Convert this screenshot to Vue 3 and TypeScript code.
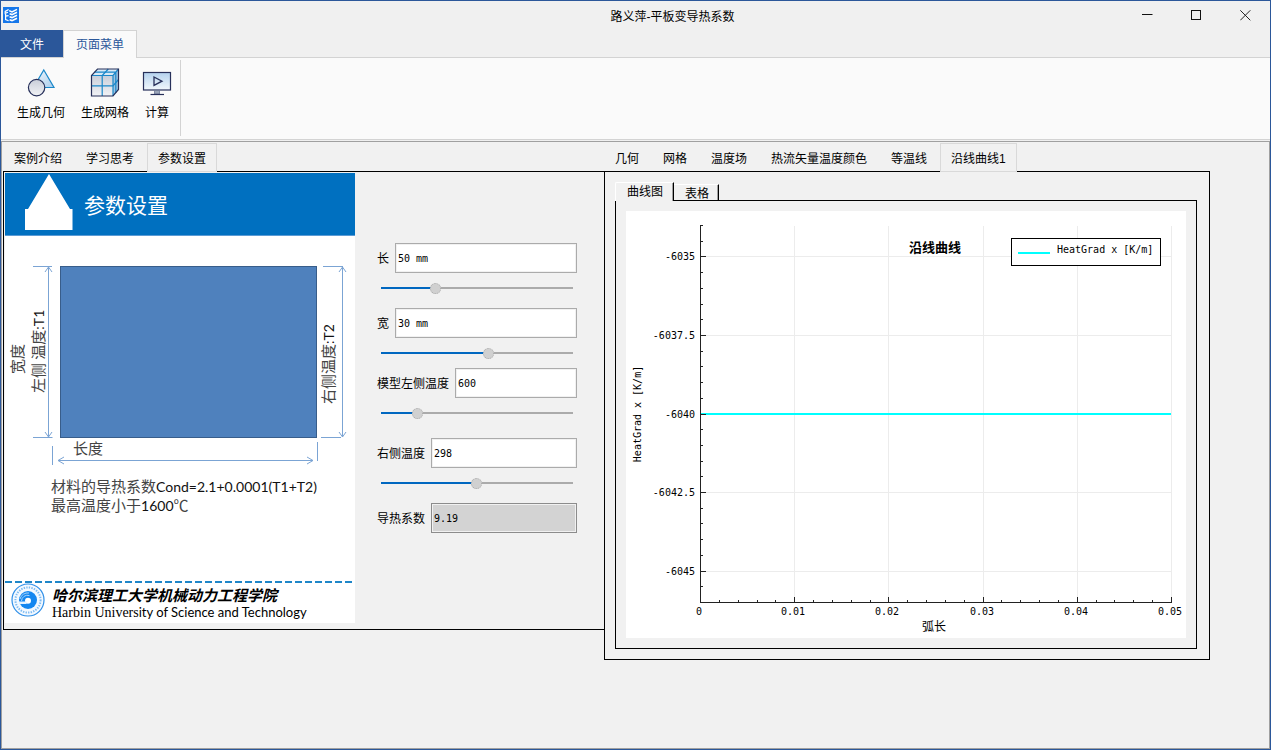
<script setup lang="ts">
import { computed, ref } from 'vue'

interface Field {
  id: string
  label: string
  value: string
  position?: number
  spacing?: 'tight' | 'loose'
}

const leftTabs = ['案例介绍', '学习思考', '参数设置']
const resultTabs = ['几何', '网格', '温度场', '热流矢量温度颜色', '等温线', '沿线曲线1']
const viewTabs = ['曲线图', '表格']

const leftTab = ref('参数设置')
const resultTab = ref('沿线曲线1')
const viewTab = ref('曲线图')

const fields = ref<Field[]>([
  { id: 'length', label: '长', value: '50 mm', position: 268 },
  { id: 'width', label: '宽', value: '30 mm', position: 566, spacing: 'tight' },
  { id: 'left-temp', label: '模型左侧温度', value: '600', position: 174, spacing: 'loose' },
  { id: 'right-temp', label: '右侧温度', value: '298', position: 495 },
  { id: 'conductivity', label: '导热系数', value: '9.19' },
])

const plot = { left: 74, right: 545, top: 14, bottom: 391 }

const xTicks = computed(() =>
  Array.from({ length: 26 }, (_, i) => ({
    at: Math.round(plot.left + (i * (plot.right - plot.left)) / 25),
    major: i % 5 === 0,
    label: i === 0 ? '0' : (i / 500).toFixed(2),
  })),
)
const yTicks = computed(() =>
  Array.from({ length: 25 }, (_, i) => ({
    at: Math.round(plot.top + (i * (plot.bottom - plot.top)) / 24),
    major: i % 5 === 2,
    label: String(-6034 - i / 2),
  })),
)
const xMajor = computed(() => xTicks.value.filter((t) => t.major))
const yMajor = computed(() => yTicks.value.filter((t) => t.major))
</script>

<template>
  <div class="window">
    <header class="titlebar">
      <svg class="app-icon" width="16" height="16" viewBox="0 0 16 16" aria-hidden="true">
        <rect width="16" height="16" fill="#1677ea" />
        <g fill="none" stroke="#fff">
          <path d="M5.6 2.4 L2.2 4.4 V6.4 L5 5.2 M2.6 7 V12.6 L5.6 13.8 M2.6 9.2 L5.6 8.6" stroke-width="1.2" />
          <path d="M6.2 3.6 L9 5 L14 2.4" stroke-width="1.5" />
          <path d="M6.6 6.8 L9 7.6 L14 5.2 M6.6 9.8 L9 10.6 L14 8.2 M6.6 12.8 L9 13.6 L14 11.2" stroke-width="1.6" />
        </g>
      </svg>
      <h1 class="title">路义萍-平板变导热系数</h1>
      <div class="controls">
        <button type="button" aria-label="最小化">
          <svg width="11" height="11" viewBox="0 0 11 11"><path d="M0 4.5 H10.5" stroke="#111" /></svg>
        </button>
        <button type="button" aria-label="最大化">
          <svg width="11" height="11" viewBox="0 0 11 11"><rect x=".5" y=".5" width="9" height="9" fill="none" stroke="#111" /></svg>
        </button>
        <button type="button" aria-label="关闭">
          <svg width="11" height="11" viewBox="0 0 11 11"><path d="M.3 .3 L10.3 10.3 M10.3 .3 L.3 10.3" stroke="#222" /></svg>
        </button>
      </div>
    </header>

    <nav class="ribbon-tabs">
      <button type="button" class="file-tab">文件</button>
      <button type="button" class="page-tab">页面菜单</button>
    </nav>

    <section class="ribbon">
      <div class="ribbon-group">
        <button type="button" class="tool">
          <svg width="32" height="32" viewBox="0 0 32 32" aria-hidden="true">
            <defs>
              <linearGradient id="tri" x1="0" y1="0" x2="1" y2="1"><stop offset="0" stop-color="#f4f9fd" /><stop offset="1" stop-color="#a9cdec" /></linearGradient>
              <linearGradient id="ball" x1="0" y1="0" x2="0" y2="1"><stop offset="0" stop-color="#c9ced9" /><stop offset="1" stop-color="#f1f2f5" /></linearGradient>
            </defs>
            <path d="M18.8 3 L29 20.5 H8.5 Z" fill="url(#tri)" stroke="#1a87c9" stroke-width="1.2" />
            <circle cx="11.6" cy="20.6" r="8.2" fill="url(#ball)" stroke="#27305a" stroke-width="1.2" />
          </svg>
          <span>生成几何</span>
        </button>
        <button type="button" class="tool">
          <svg width="32" height="32" viewBox="0 0 32 32" aria-hidden="true">
            <path d="M2.5 8.5 L8.5 2 H29.5 L24 8.5 Z" fill="#d8e9f6" />
            <path d="M24 8.5 L29.5 2 V22.5 L24 29 Z" fill="#9cc3e2" />
            <rect x="2.5" y="8.5" width="21.5" height="20.5" fill="url(#ball)" />
            <g fill="none" stroke="#1a87c9" stroke-width="1.2">
              <path d="M13.2 29 V8.5 L19.3 2 M2.5 18.8 H24 L29.5 12.5" />
              <path d="M5.5 5.2 H26.8 V25.8 M2.5 8.5 H24 V29 M24 8.5 L29.5 2" />
            </g>
            <path d="M2.5 29 V8.5 L8.5 2 H29.5 V22.5 L24 29 Z" fill="none" stroke="#27305a" stroke-width="1.2" />
          </svg>
          <span>生成网格</span>
        </button>
        <button type="button" class="tool">
          <svg width="32" height="32" viewBox="0 0 32 32" aria-hidden="true">
            <defs>
              <linearGradient id="screen" x1="0" y1="0" x2="0" y2="1"><stop offset="0" stop-color="#b4d2ee" /><stop offset="1" stop-color="#f2f8fc" /></linearGradient>
            </defs>
            <rect x="2.5" y="5.5" width="27" height="17.5" fill="url(#screen)" stroke="#27305a" stroke-width="1.2" />
            <path d="M13 10 L21 14.2 L13 18.4 Z" fill="none" stroke="#27305a" stroke-width="1.3" />
            <path d="M13.5 23.5 H18.5 V27 H13.5 Z" fill="#9aa4b8" stroke="#6c7793" stroke-width=".8" />
            <path d="M9.5 27.5 H23" stroke="#27305a" stroke-width="1.2" />
          </svg>
          <span>计算</span>
        </button>
      </div>
    </section>

    <main class="workspace">
      <section class="pane pane-left">
        <div class="tabs" role="tablist">
          <button v-for="t in leftTabs" :key="t" type="button" role="tab" class="tab" :class="{ active: t === leftTab }" :aria-selected="t === leftTab" @click="leftTab = t">{{ t }}</button>
        </div>
        <div class="frame frame-left">
          <article class="slide">
            <header class="slide-head">
              <svg width="50" height="58" viewBox="0 0 50 58" aria-hidden="true">
                <path d="M25 1 L46 36 H48.5 V57 H1 V36 H4 Z" fill="#fff" />
              </svg>
              <h2>参数设置</h2>
            </header>
            <svg class="diagram" viewBox="0 0 350 240" role="img" aria-label="平板尺寸与边界温度">
              <rect x="55.5" y="30.5" width="256" height="171" fill="#4f81bd" stroke="#385d8a" />
              <g fill="none" stroke="#7ba4d4">
                <path d="M28 30.5 H47 M28 201.5 H47.5 M43.5 31 V201 M40 36 L43.5 31 L47 36 M40 196 L43.5 201 L47 196" />
                <path d="M318 30.5 H338 M316 201.5 H336 M337.5 31 V201 M334 36 L337.5 31 L341 36 M334 196 L337.5 201 L341 196" />
                <path d="M47.5 210 V229 M312.5 206 V225 M53 224.5 H308 M59 221 L53 224.5 L59 228 M302 221 L308 224.5 L302 228" />
              </g>
              <text class="cjk" x="68" y="218">长度</text>
              <text class="cjk" transform="translate(18 138) rotate(-90)">宽度</text>
              <text class="cjk" transform="translate(39 157) rotate(-90)">左侧 温度<tspan class="latin">:T1</tspan></text>
              <text class="cjk" transform="translate(329 168) rotate(-90)">右侧温度<tspan class="latin">:T2</tspan></text>
            </svg>
            <p class="note">
              材料的导热系数<span class="latin">Cond=2.1+0.0001(T1+T2)</span><br />
              最高温度小于<span class="latin">1600</span>℃
            </p>
            <footer class="slide-foot">
              <svg width="36" height="36" viewBox="0 0 36 36" aria-hidden="true">
                <circle cx="18" cy="18" r="16" fill="#f3f9ff" stroke="#2f8fe8" stroke-width="1.2" />
                <circle cx="18" cy="18" r="12.6" fill="none" stroke="#7dbbf2" stroke-width="2" stroke-dasharray="1.4 1.2" />
                <circle cx="18" cy="18" r="9" fill="#1487f0" />
                <path d="M10 17 a8 8 0 0 1 9 -6 M11.5 19 a6 6 0 0 1 8 -5.4" fill="none" stroke="#a9d5fb" />
                <circle cx="18" cy="18.8" r="3" fill="#fff" />
                <path d="M8.5 19.5 h8 v2.4 h-7 z" fill="#e4f2ff" />
              </svg>
              <div class="school">
                <strong>哈尔滨理工大学机械动力工程学院</strong>
                <span><span class="serif">Harbin Univers</span>ity of Science and Technology</span>
              </div>
            </footer>
          </article>

          <form class="params" @submit.prevent>
            <div v-for="f in fields" :key="f.id" class="field" :class="f.spacing">
              <div class="field-row">
                <label :for="f.id">{{ f.label }}</label>
                <input :id="f.id" v-model="f.value" type="text" :readonly="f.position === undefined" />
              </div>
              <input
                v-if="f.position !== undefined"
                v-model.number="f.position"
                type="range"
                min="0"
                max="1000"
                :aria-label="f.label"
                :style="{ '--fill': f.position / 10 + '%' }"
              />
            </div>
          </form>
        </div>
      </section>

      <section class="pane pane-right">
        <div class="tabs" role="tablist">
          <button v-for="t in resultTabs" :key="t" type="button" role="tab" class="tab" :class="{ active: t === resultTab }" :aria-selected="t === resultTab" @click="resultTab = t">{{ t }}</button>
        </div>
        <div class="frame frame-right">
          <div class="view-tabs" role="tablist">
            <button v-for="t in viewTabs" :key="t" type="button" role="tab" class="view-tab" :class="{ active: t === viewTab }" :aria-selected="t === viewTab" @click="viewTab = t">{{ t }}</button>
          </div>
          <div class="view">
            <svg class="chart" viewBox="0 0 560 427" role="img" aria-label="沿线曲线">
              <rect width="560" height="427" fill="#fff" />
              <g class="grid">
                <path v-for="t in xMajor.slice(1)" :key="'gx' + t.at" :d="`M${t.at + 0.5} ${plot.top + 1} V${plot.bottom}`" />
                <path v-for="t in yMajor" :key="'gy' + t.at" :d="`M${plot.left} ${t.at + 0.5} H${plot.right}`" />
              </g>
              <path class="curve" :d="`M${plot.left + 1} 203 H${plot.right}`" />
              <g class="axis">
                <path :d="`M${plot.left + 0.5} ${plot.top} V${plot.bottom + 0.5} H${plot.right + 1}`" />
                <path v-for="t in xTicks" :key="'tx' + t.at" :d="`M${t.at + 0.5} ${plot.bottom} v${t.major ? -5 : -2}`" />
                <path v-for="t in yTicks" :key="'ty' + t.at" :d="`M${plot.left} ${t.at + 0.5} h${t.major ? 6 : 3}`" />
              </g>
              <g class="tick-text" text-anchor="end">
                <text v-for="t in yMajor" :key="'ly' + t.at" x="69" :y="t.at + 4">{{ t.label }}</text>
              </g>
              <g class="tick-text" text-anchor="middle">
                <text v-for="t in xMajor" :key="'lx' + t.at" :x="t.at - 1" y="404">{{ t.label }}</text>
                <text transform="translate(15 203) rotate(-90)">HeatGrad x [K/m]</text>
              </g>
              <text class="chart-title" x="309" y="41" text-anchor="middle">沿线曲线</text>
              <text class="axis-title" x="308" y="420" text-anchor="middle">弧长</text>
              <rect x="385.5" y="27.5" width="149" height="27" fill="#fff" stroke="#000" />
              <path class="curve" d="M392 42 H424" />
              <text class="tick-text" x="431" y="42">HeatGrad x [K/m]</text>
            </svg>
          </div>
        </div>
      </section>
    </main>
  </div>
</template>

<style>
body {
  margin: 0;
}
</style>

<style scoped>
.window {
  box-sizing: border-box;
  display: flex;
  flex-direction: column;
  min-height: 100vh;
  border: 1px solid #2b579a;
  background: #f0f0f0;
  color: #000;
  font: 12px/16px "Liberation Sans", "Noto Sans CJK SC", sans-serif;
}
button {
  margin: 0;
  padding: 0;
  border: 0;
  background: none;
  color: inherit;
  font: inherit;
  white-space: nowrap;
}
svg {
  display: block;
}

.titlebar {
  display: flex;
  align-items: center;
  height: 29px;
  padding-left: 2px;
}
.app-icon {
  align-self: flex-start;
  margin-top: 6px;
}
.title {
  flex: 1;
  margin: 0;
  padding: 2px 0 0 203px;
  font-size: 12px;
  font-weight: 400;
  text-align: center;
}
.controls {
  display: flex;
}
.controls button {
  display: flex;
  align-items: center;
  justify-content: center;
  width: 49px;
  height: 29px;
}

.ribbon-tabs {
  display: flex;
  height: 27px;
}
.file-tab {
  width: 62px;
  padding-top: 2px;
  background: #2b579a;
  color: #fff;
}
.page-tab {
  z-index: 1;
  height: 28px;
  padding: 0 12px;
  border: 1px solid #d3d3d3;
  border-bottom: 0;
  background: #fafafa;
  color: #2b579a;
}
.ribbon {
  display: flex;
  height: 81px;
  border: solid #d3d3d3;
  border-width: 1px 0;
  background: #fafafa;
}
.ribbon-group {
  display: flex;
  align-items: flex-start;
  margin: 2px 0 3px;
  padding: 7px 3px 0 8px;
  border-right: 1px solid #d3d3d3;
}
.tool {
  display: flex;
  flex-direction: column;
  align-items: center;
  gap: 6px;
  padding: 0 8px;
}
.tool:last-child {
  padding: 0 4px;
}

.workspace {
  display: flex;
  flex: 1;
  align-items: flex-start;
  margin-top: 1px;
  padding: 1px 59px 0 0;
  border: 1px solid #a0a0a0;
  background: #f1f1f1;
}
.pane {
  min-width: 0;
}
.pane-left {
  flex: 601 1 0;
}
.pane-right {
  flex: 607 1 0;
}
.tabs {
  display: flex;
}
.tab {
  z-index: 1;
  height: 29px;
  margin-bottom: -1px;
  padding: 2px 11px 0;
  border: 1px solid transparent;
}
.tab.active {
  margin-left: 1px;
  padding: 2px 10px 0;
  border-color: #d9d9d9;
  background: #f1f1f1;
}
.frame {
  margin-left: 1px;
  border: 1px solid #000;
}
.frame-left {
  display: flex;
  margin-right: -1px;
  padding: 1px 27px 6px 1px;
  border-right: 0;
}

.slide {
  display: flex;
  flex-direction: column;
  flex: 0 0 350px;
  height: 450px;
  background: #fff;
}
.slide-head {
  display: flex;
  gap: 10px;
  height: 62px;
  padding-left: 19px;
  border-bottom: 1px solid #5b9bd5;
  background: #0070c0;
  color: #fff;
}
.slide-head h2 {
  align-self: center;
  margin: 0;
  font: 21px/28px "Noto Sans CJK SC", sans-serif;
}
.diagram {
  width: 100%;
}
.cjk {
  fill: #444;
  font: 15px "Noto Sans CJK SC", sans-serif;
}
.latin {
  color: #111;
  fill: #111;
  font-family: Lato, sans-serif;
  font-size: 14px;
}
.note {
  margin: 1px 0 0 46px;
  color: #444;
  font: 15px/18px "Noto Sans CJK SC", sans-serif;
  white-space: nowrap;
}
.slide-foot {
  display: flex;
  gap: 5px;
  margin-top: auto;
  padding: 0 5px 2px;
  position: relative;
}
.slide-foot::before {
  position: absolute;
  inset: -1px 0 auto;
  height: 2px;
  background: repeating-linear-gradient(90deg, #1f86c8 0 7px, transparent 7px 10px);
  content: "";
}
.school {
  display: flex;
  flex-direction: column;
  padding: 4px 0 0 1px;
  font: 13px/16px Lato, sans-serif;
  white-space: nowrap;
}
.school strong {
  font: italic bold 15px/18px "Noto Sans CJK SC", sans-serif;
}
.serif {
  font-family: "Liberation Serif", serif;
  font-size: 14px;
}

.params {
  flex: 1;
  min-width: 0;
  padding: 70px 0 0 22px;
}
.field {
  margin-bottom: 15px;
}
.field.tight {
  margin-bottom: 10px;
}
.field.loose {
  margin-bottom: 20px;
}
.field-row {
  display: flex;
  align-items: center;
  gap: 6px;
}
.field-row label {
  padding-top: 2px;
}
input[type="text"] {
  box-sizing: border-box;
  flex: 1;
  min-width: 0;
  height: 30px;
  padding: 0 2px;
  border: 1px solid #ababab;
  border-radius: 0;
  outline: 0;
  background: #fff;
  box-shadow: inset 0 0 0 1px #f1f1f1;
  color: #000;
  font: 10px/16px "DejaVu Sans Mono", monospace;
}
input[type="text"]:read-only {
  border-color: #8c8c8c;
  background: #d3d3d3;
}
input[type="range"] {
  display: block;
  width: calc(100% - 8px);
  height: 10px;
  margin: 10px 4px 0;
  appearance: none;
  background: linear-gradient(90deg, #0067c0 var(--fill), #ababab var(--fill)) center / 100% 2px no-repeat;
}
input[type="range"]::-webkit-slider-thumb {
  box-sizing: border-box;
  width: 11px;
  height: 11px;
  appearance: none;
  border: 1px dotted #ababab;
  border-radius: 50%;
  background: #d0d0d0;
}

.frame-right {
  padding: 10px 12px 10px 10px;
}
.view-tabs {
  display: flex;
  align-items: flex-end;
  height: 18px;
}
.view-tab {
  height: 16px;
  padding: 1px 9px 0 11px;
  border: solid #fff;
  border-width: 1px 0 0;
  border-right: 1px solid #000;
  box-shadow: inset -1px 0 #a0a0a0;
}
.view-tab.active {
  z-index: 1;
  height: 19px;
  margin-bottom: -1px;
  padding: 0 10px 0 11px;
  border-left: 1px solid #fff;
  border-top-left-radius: 2px;
  background: #f1f1f1;
}
.view {
  padding: 10px;
  border: 1px solid #000;
}
.chart {
  width: 100%;
}
.grid path {
  fill: none;
  stroke: #ececec;
}
.axis path {
  fill: none;
  stroke: #222;
}
.curve {
  fill: none;
  stroke: #0ff;
  stroke-width: 2px;
}
.tick-text {
  font: 10px "DejaVu Sans Mono", monospace;
}
.chart-title {
  font: bold 13px "Noto Sans CJK SC", sans-serif;
}
.axis-title {
  font: 12px "Noto Sans CJK SC", sans-serif;
}
</style>
